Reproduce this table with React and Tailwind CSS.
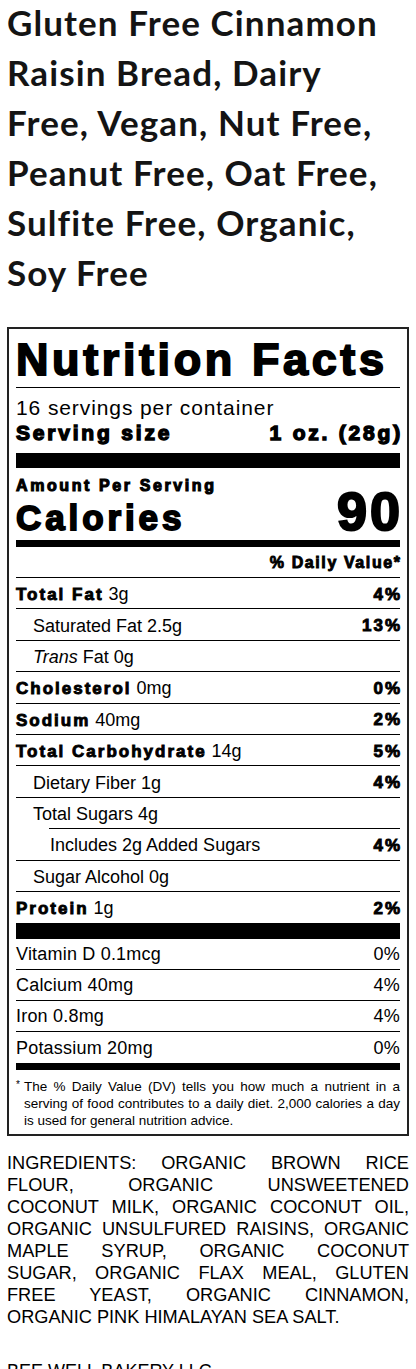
import React from 'react';

const heavy = "font-bold [-webkit-text-stroke:0.9px_black]";

const ingredientLines = [
  "INGREDIENTS: ORGANIC BROWN RICE",
  "FLOUR, ORGANIC UNSWEETENED",
  "COCONUT MILK, ORGANIC COCONUT OIL,",
  "ORGANIC UNSULFURED RAISINS, ORGANIC",
  "MAPLE SYRUP, ORGANIC COCONUT",
  "SUGAR, ORGANIC FLAX MEAL, GLUTEN",
  "FREE YEAST, ORGANIC CINNAMON,",
];

function Row({ label, amount, dv, indent = false, border = true, h = "h-[31.4px]" }) {
  return (
    <div className={`flex items-center justify-between pt-[2px] ${h} ${border ? "border-b border-black" : ""} ${indent ? "pl-[17px]" : ""}`}>
      <div className="text-[18px] leading-none">{label}{amount}</div>
      {dv && <div className={`text-[17px] leading-none tracking-[2px] -mr-[2px] ${heavy}`}>{dv}</div>}
    </div>
  );
}

function Bold({ children }) {
  return <span className={`text-[17px] tracking-[2px] ${heavy}`}>{children}</span>;
}

function Vitamin({ label, dv, border = true }) {
  return (
    <div className={`flex h-[31px] items-center justify-between pt-[1px] text-[18px] leading-none tracking-[0.2px] ${border ? "border-b border-black" : ""}`}>
      <span>{label}</span>
      <span>{dv}</span>
    </div>
  );
}

export default function App() {
  return (
    <div className="min-h-screen bg-white text-[#111] font-['Liberation_Sans',Arial,sans-serif]">
      {/* Product title */}
      <h1 className="-mt-[3px] w-[395px] px-[7px] font-['Lato',sans-serif] text-[35px] font-bold leading-[50px] tracking-[1.1px] text-[#141414]">
        Gluten Free Cinnamon Raisin Bread, Dairy Free, Vegan, Nut Free, Peanut Free, Oat Free, Sulfite Free, Organic, Soy Free
      </h1>

      {/* Nutrition label */}
      <div className="mx-[7px] mt-[30px] border-2 border-[#222] px-[7px] text-black">
        <div className="h-[59px] border-b border-black pt-[8px]">
          <div className="text-[45px] font-bold leading-[45px] tracking-[3.6px] [-webkit-text-stroke:1.8px_black]">Nutrition Facts</div>
        </div>

        <div className="pt-[8px]">
          <div className="text-[21px] leading-[24px] tracking-[0.9px]">16 servings per container</div>
          <div className="flex items-baseline justify-between leading-[26px]">
            <span className="text-[21px] font-bold tracking-[2.8px] [-webkit-text-stroke:1.4px_black]">Serving size</span>
            <span className="-mr-[3px] text-[21px] font-bold tracking-[2.8px] [-webkit-text-stroke:1.4px_black]">1 oz. (28g)</span>
          </div>
        </div>

        <div className="mt-[7px] h-[15px] bg-black" />

        <div className="mt-[8px] flex items-end justify-between">
          <div>
            <div className="text-[16px] font-bold leading-[20px] tracking-[2.6px] [-webkit-text-stroke:1.1px_black]">Amount Per Serving</div>
            <div className="mt-[4px] text-[35px] font-bold leading-[36px] tracking-[3.9px] [-webkit-text-stroke:1.8px_black]">Calories</div>
          </div>
          <div className="-mr-[3px] text-[54px] font-bold leading-[49px] tracking-[3px] [-webkit-text-stroke:2.2px_black]">90</div>
        </div>

        <div className="mt-[4px] h-[7px] bg-black" />

        <div className="flex h-[31px] items-center justify-end border-b border-black pt-[2px]">
          <span className={`-mr-[1.6px] text-[16px] leading-none tracking-[1.6px] ${heavy}`}>% Daily Value*</span>
        </div>

        <Row label={<Bold>Total Fat</Bold>} amount=" 3g" dv="4%" />
        <Row indent label="Saturated Fat 2.5g" dv="13%" />
        <Row indent label={<><i>Trans</i> Fat 0g</>} />
        <Row label={<Bold>Cholesterol</Bold>} amount=" 0mg" dv="0%" />
        <Row label={<Bold>Sodium</Bold>} amount=" 40mg" dv="2%" />
        <Row label={<Bold>Total Carbohydrate</Bold>} amount=" 14g" dv="5%" />
        <Row indent label="Dietary Fiber 1g" dv="4%" />
        <Row indent border={false} h="h-[30.4px]" label="Total Sugars 4g" />
        <div className="border-b border-black">
          <div className="ml-[33px] flex h-[31.4px] items-center justify-between border-t border-black pt-[2px] pl-[1px]">
            <div className="text-[18px] leading-none">Includes 2g Added Sugars</div>
            <div className={`-mr-[2px] text-[17px] leading-none tracking-[2px] ${heavy}`}>4%</div>
          </div>
        </div>
        <Row indent label="Sugar Alcohol 0g" />
        <Row border={false} h="h-[31px]" label={<Bold>Protein</Bold>} amount=" 1g" dv="2%" />

        <div className="h-[16px] bg-black" />

        <Vitamin label="Vitamin D 0.1mcg" dv="0%" />
        <Vitamin label="Calcium 40mg" dv="4%" />
        <Vitamin label="Iron 0.8mg" dv="4%" />
        <Vitamin label="Potassium 20mg" dv="0%" border={false} />

        <div className="h-[7px] bg-black" />

        <div className="flex pt-[8px] pb-[5px] text-[13.5px] leading-[17px]">
          <span className="w-[8px] shrink-0 text-[10px] leading-[14px]">*</span>
          <p className="text-justify">
            The % Daily Value (DV) tells you how much a nutrient in a serving of food contributes to a daily diet. 2,000 calories a day is used for general nutrition advice.
          </p>
        </div>
      </div>

      {/* Ingredients */}
      <div className="mt-[16px] px-[7px] text-[18.2px] leading-[22px] text-black">
        {ingredientLines.map((line) => (
          <span key={line} className="block text-justify [text-align-last:justify]">{line}</span>
        ))}
        <span className="block">ORGANIC PINK HIMALAYAN SEA SALT.</span>
      </div>
      <p className="mt-[32px] px-[7px] text-[18px] leading-[22px] text-black">BEE WELL BAKERY LLC</p>
    </div>
  );
}
